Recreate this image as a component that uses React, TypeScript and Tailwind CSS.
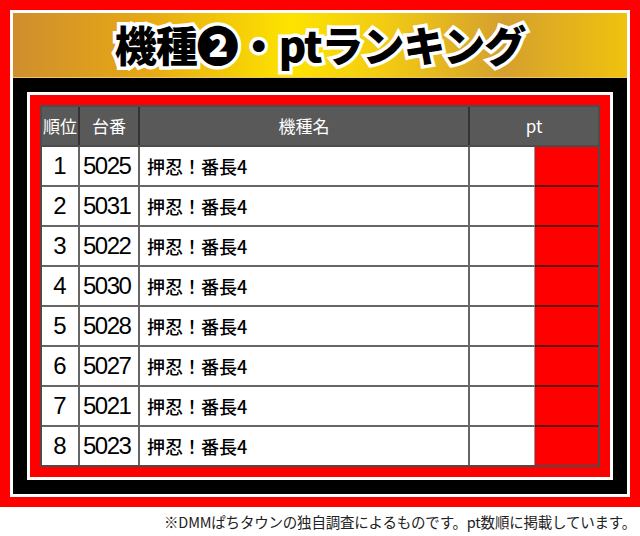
import React from 'react';

interface RankRow {
  rank: number;
  machineNo: string;
  name: string;
}

const rows: RankRow[] = [
  { rank: 1, machineNo: '5025', name: '押忍！番長4' },
  { rank: 2, machineNo: '5031', name: '押忍！番長4' },
  { rank: 3, machineNo: '5022', name: '押忍！番長4' },
  { rank: 4, machineNo: '5030', name: '押忍！番長4' },
  { rank: 5, machineNo: '5028', name: '押忍！番長4' },
  { rank: 6, machineNo: '5027', name: '押忍！番長4' },
  { rank: 7, machineNo: '5021', name: '押忍！番長4' },
  { rank: 8, machineNo: '5023', name: '押忍！番長4' },
];

const jp = "font-['Noto_Sans_CJK_JP','Noto_Sans',sans-serif]";
const num = "font-['Liberation_Sans','Noto_Sans_CJK_JP',sans-serif]";

export default function App() {
  return (
    <div className="w-[640px] h-[536px] bg-white flex flex-col">
      {/* Frame */}
      <div className="border-[10px] border-[#ff0000] bg-white p-[3px]">
        {/* Title */}
        <div className="h-[65px] flex items-center justify-center bg-[linear-gradient(90deg,#cf8e2e_0%,#e7a914_22%,#fde300_45%,#f3cc12_60%,#d5a02e_80%,#f0c20e_100%)] border-b border-[#e8c860]">
          <h1
            className={`${jp} text-[42px] leading-none font-black text-black tracking-[-1px] [-webkit-text-stroke:7px_#fff] [paint-order:stroke_fill] pb-[2px]`}
          >
            機種❷・ptランキング
          </h1>
        </div>

        {/* Board */}
        <div className="bg-black p-[14px]">
          <div className="border-[3px] border-white bg-[#ff0000] p-[10px]">
            <div className="w-[560px] border-2 border-black/70 bg-white">
              {/* Header */}
              <div className={`flex h-[38px] bg-[#595959] text-white text-[17px] ${jp}`}>
                <div className="w-[38px] flex items-center justify-center border-r-2 border-[#333]">順位</div>
                <div className="w-[60px] flex items-center justify-center border-r-2 border-[#333]">台番</div>
                <div className="w-[330px] flex items-center justify-center border-r-2 border-[#333]">機種名</div>
                <div className="flex-1 flex items-center justify-center">pt</div>
              </div>

              {/* Rows */}
              {rows.map((row, i) => {
                const last = i === rows.length - 1;
                const b = last ? 'h-[38px]' : 'h-[40px] border-b-2';
                return (
                  <div key={row.rank} className={`flex ${i === 0 ? 'border-t-2 border-black/70' : ''}`}>
                    <div className={`w-[38px] ${b} border-r-2 border-black/60 flex items-center justify-center ${num} text-[24px] text-black`}>
                      {row.rank}
                    </div>
                    <div className={`w-[60px] ${b} border-r-2 border-black/60 flex items-center pl-[3px] ${num} text-[24px] tracking-[-1.5px] text-black`}>
                      {row.machineNo}
                    </div>
                    <div className={`w-[330px] ${b} border-r-2 border-black/60 flex items-center pl-[7px] ${jp} text-[18px] font-medium text-black`}>
                      {row.name}
                    </div>
                    <div className={`w-[65px] ${b} border-black/60 border-r border-r-[#7fa3a3]`}></div>
                    <div className={`flex-1 ${b} border-black/60 bg-[#ff0000]`}></div>
                  </div>
                );
              })}
            </div>
          </div>
        </div>
      </div>

      {/* Footnote */}
      <div className={`flex-1 flex items-center justify-end pr-[4px] ${jp} text-[14.5px] tracking-[-0.2px] text-[#222]`}>
        ※DMMぱちタウンの独自調査によるものです。pt数順に掲載しています。
      </div>
    </div>
  );
}
